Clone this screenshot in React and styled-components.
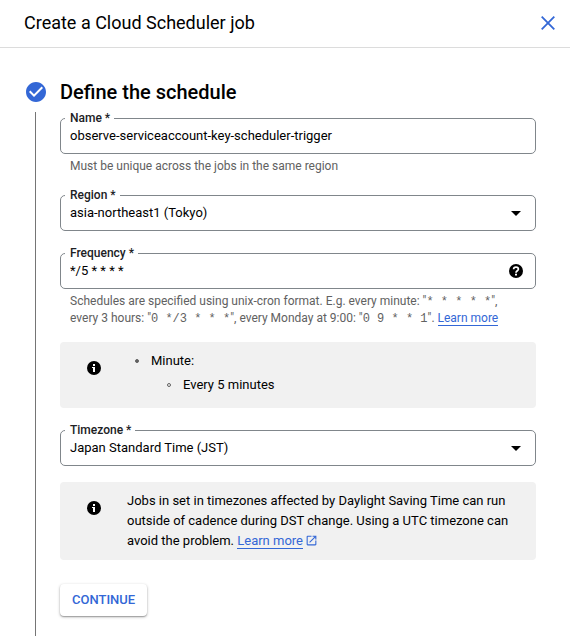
import React from "react";
import styled, { createGlobalStyle } from "styled-components";
import { MdArrowDropDown, MdCheckCircle, MdOpenInNew } from "react-icons/md";

const GlobalStyle = createGlobalStyle`
  *,
  *::before {
    box-sizing: border-box;
  }

  body {
    margin: 0;
    background: #fff;
    color: #000;
    font-family: Roboto, "Liberation Sans", sans-serif;
    font-size: 13px;
    line-height: 20px;
  }
`;

const Page = styled.div`
  min-height: 100vh;
  display: flex;
  flex-direction: column;
`;

const Header = styled.header`
  display: flex;
  align-items: center;
  justify-content: space-between;
  padding: 11px 15px 12px 24px;
  border-bottom: 1px solid #dcdcdc;
`;

const PageTitle = styled.h1`
  margin: 0;
  font-size: 18px;
  font-weight: 400;
  line-height: 24px;
`;

const IconButton = styled.button`
  display: flex;
  padding: 0;
  border: 0;
  background: none;
  color: ${(props) => props.$color || "#000"};
  cursor: pointer;
`;

const Step = styled.main`
  flex: 1;
  display: grid;
  grid-template-columns: 24px minmax(0, 1fr);
  grid-template-rows: auto 1fr;
  column-gap: 12px;
  row-gap: 8px;
  padding: 32px 34px 0 24px;
`;

const StepIcon = styled(MdCheckCircle)`
  color: #3367d6;
`;

const StepTitle = styled.h2`
  margin: 0;
  font-size: 20px;
  font-weight: 500;
  line-height: 24px;
`;

const Rail = styled.div`
  width: 1px;
  margin-left: 11px;
  background: #757575;
`;

const Form = styled.form`
  padding: 6px 0 20px;
`;

const Field = styled.div`
  margin-bottom: ${(props) => props.$gap || 22}px;
`;

const Outline = styled.div`
  position: relative;
  display: flex;
  align-items: center;
  height: 36px;
  border: 1px solid #80868b;
  border-radius: 5px;
`;

// sits on the top border and cuts a notch in it
const Label = styled.label`
  position: absolute;
  top: -9px;
  left: 4px;
  padding: 0 4px 0 5px;
  background: #fff;
  color: #202124;
  font-size: 12px;
  font-weight: 500;
  line-height: 16px;
`;

const controlStyles = `
  flex: 1;
  min-width: 0;
  height: 34px;
  padding: 0 9px;
  border: 0;
  outline: 0;
  background: transparent;
  color: #000;
  font: inherit;
`;

const Input = styled.input`
  ${controlStyles}
  padding-bottom: 2px;
`;

const Select = styled.select`
  ${controlStyles}
  appearance: none;
  padding-right: 32px;
  margin-right: -32px;
`;

const SelectArrow = styled(MdArrowDropDown)`
  margin-right: 7px;
  pointer-events: none;
`;

const HelpButton = styled(IconButton)`
  margin-right: 12px;
`;

const Hint = styled.div`
  padding: 4px 10px 0;
  color: #616161;
  font-size: 12px;
  line-height: 17px;
`;

const Cron = styled.code`
  font-family: "Liberation Mono", monospace;
  font-size: 12px;
  line-height: 12px;
`;

const Link = styled.a`
  border-bottom: 1px solid #3367d6;
  color: #3367d6;
  text-decoration: none;
`;

const ExternalIcon = styled(MdOpenInNew)`
  margin-left: 2px;
  color: #3367d6;
  vertical-align: -2px;
`;

const Callout = styled.section`
  display: flex;
  gap: 26px;
  margin-bottom: ${(props) => props.$gap || 22}px;
  padding: 9px 16px 9px 27px;
  border-radius: 4px;
  background: #f1f1f1;
`;

const CalloutIcon = styled.svg`
  flex: none;
  margin-top: 10px;
`;

const CalloutText = styled.p`
  margin: 0;
`;

const List = styled.ul`
  margin: 0;
  padding: 0;
  list-style: none;
`;

const ListItem = styled.li`
  margin-bottom: 4px;
`;

const ListLabel = styled.div`
  display: flex;
  align-items: center;
  gap: 12px;
  margin: 0 0 4px ${(props) => (props.$nested ? 40 : 8)}px;

  &::before {
    content: "";
    width: 4px;
    height: 4px;
    border: 1px solid #616161;
    border-radius: 50%;
    background: ${(props) => (props.$nested ? "transparent" : "#616161")};
  }
`;

const Button = styled.button`
  height: 32px;
  padding: 0 12px;
  border: 0;
  border-radius: 4px;
  background: #fff;
  box-shadow: 0 1px 3px rgba(0, 0, 0, 0.3), 0 1px 1px rgba(0, 0, 0, 0.2);
  color: #3367d6;
  font: inherit;
  font-weight: 500;
  text-transform: uppercase;
  cursor: pointer;
`;

function CloseIcon() {
  return (
    <svg width="14" height="14" viewBox="0 0 14 14">
      <path
        d="M0.7 0.7L13.3 13.3M13.3 0.7L0.7 13.3"
        stroke="currentColor"
        strokeWidth="1.8"
      />
    </svg>
  );
}

function HelpIcon() {
  return (
    <svg width="14" height="14" viewBox="0 0 14 14" fill="none">
      <circle cx="7" cy="7" r="7" fill="currentColor" />
      <path
        d="M4.6 5.3C4.6 3.9 5.6 3.1 7 3.1S9.4 3.9 9.4 5.2C9.4 6.7 7 6.8 7 8.7"
        stroke="#fff"
        strokeWidth="1.7"
      />
      <rect x="6" y="9.7" width="2" height="1.8" fill="#fff" />
    </svg>
  );
}

function InfoIcon() {
  return (
    <CalloutIcon width="14" height="14" viewBox="0 0 14 14">
      <circle cx="7" cy="7" r="7" />
      <path d="M6 3h2v2H6zM5 6h3v5H6V7H5z" fill="#fff" />
    </CalloutIcon>
  );
}

function TextField({ id, label, value, hint, gap, children }) {
  return (
    <Field $gap={gap}>
      <Outline>
        <Label htmlFor={id}>{label} *</Label>
        <Input id={id} type="text" defaultValue={value} required />
        {children}
      </Outline>
      {hint && <Hint>{hint}</Hint>}
    </Field>
  );
}

function SelectField({ id, label, value, gap }) {
  return (
    <Field $gap={gap}>
      <Outline>
        <Label htmlFor={id}>{label} *</Label>
        <Select id={id} defaultValue={value} required>
          <option>{value}</option>
        </Select>
        <SelectArrow size={24} />
      </Outline>
    </Field>
  );
}

export default function App() {
  return (
    <>
      <GlobalStyle />
      <Page>
        <Header>
          <PageTitle>Create a Cloud Scheduler job</PageTitle>
          <IconButton type="button" aria-label="Close" $color="#3367d6">
            <CloseIcon />
          </IconButton>
        </Header>
        <Step>
          <StepIcon size={24} />
          <StepTitle>Define the schedule</StepTitle>
          <Rail />
          <Form onSubmit={(e) => e.preventDefault()}>
            <TextField
              id="name"
              label="Name"
              value="observe-serviceaccount-key-scheduler-trigger"
              hint="Must be unique across the jobs in the same region"
              gap={20}
            />
            <SelectField
              id="region"
              label="Region"
              value="asia-northeast1 (Tokyo)"
            />
            <TextField
              id="frequency"
              label="Frequency"
              value="*/5 * * * *"
              gap={15}
              hint={
                <>
                  Schedules are specified using unix-cron format. E.g. every
                  minute: "<Cron>* * * * *</Cron>", every 3 hours: "
                  <Cron>0 */3 * * *</Cron>", every Monday at 9:00: "
                  <Cron>0 9 * * 1</Cron>". <Link href="#cron">Learn more</Link>
                </>
              }
            >
              <HelpButton type="button" aria-label="Help">
                <HelpIcon />
              </HelpButton>
            </TextField>
            <Callout>
              <InfoIcon />
              <List>
                <ListItem>
                  <ListLabel>Minute:</ListLabel>
                  <List>
                    <li>
                      <ListLabel $nested>Every 5 minutes</ListLabel>
                    </li>
                  </List>
                </ListItem>
              </List>
            </Callout>
            <SelectField
              id="timezone"
              label="Timezone"
              value="Japan Standard Time (JST)"
              gap={16}
            />
            <Callout $gap={24}>
              <InfoIcon />
              <CalloutText>
                Jobs in set in timezones affected by Daylight Saving Time can
                run outside of cadence during DST change. Using a UTC timezone
                can avoid the problem. <Link href="#dst">Learn more</Link>
                <ExternalIcon size={13} />
              </CalloutText>
            </Callout>
            <Button type="submit">Continue</Button>
          </Form>
        </Step>
      </Page>
    </>
  );
}
